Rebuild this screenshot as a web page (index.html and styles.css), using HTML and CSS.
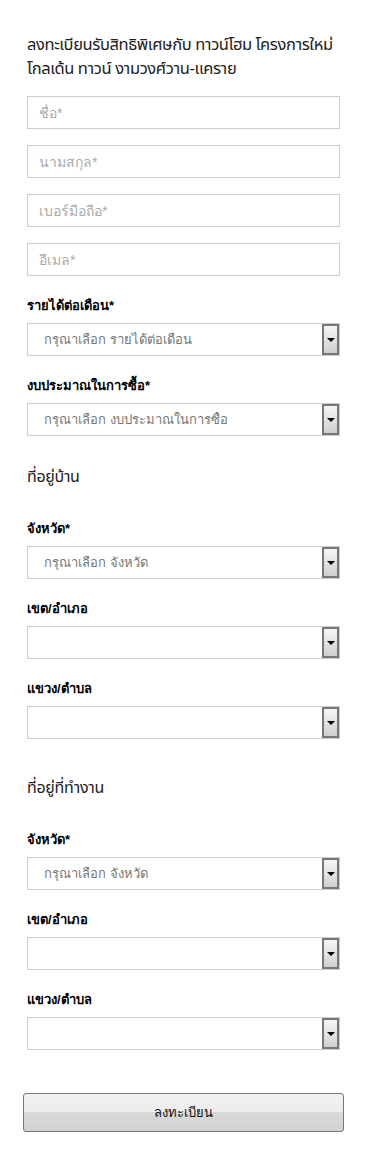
FILE: index.html
```html
<!DOCTYPE html>
<html lang="th">
<head>
    <meta charset="UTF-8">
    <meta name="viewport" content="width=device-width, initial-scale=1.0">
    <title>ลงทะเบียน</title>
    <link rel="stylesheet" href="styles.css">
</head>
<body>
    <div class="register">
        <h2 class="register-title">ลงทะเบียนรับสิทธิพิเศษกับ ทาวน์โฮม โครงการใหม่<br>โกลเด้น ทาวน์ งามวงศ์วาน-แคราย</h2>

        <div class="inputs">
            <input type="text" class="text-input" placeholder="ชื่อ*">
            <input type="text" class="text-input" placeholder="นามสกุล*">
            <input type="text" class="text-input" placeholder="เบอร์มือถือ*">
            <input type="text" class="text-input" placeholder="อีเมล*">
        </div>

        <div class="fields">
            <div class="field">
                <label class="field-label">รายได้ต่อเดือน*</label>
                <div class="select-wrap">
                    <select class="select"><option>กรุณาเลือก รายได้ต่อเดือน</option></select>
                    <span class="select-arrow"></span>
                </div>
            </div>
            <div class="field">
                <label class="field-label">งบประมาณในการซื้อ*</label>
                <div class="select-wrap">
                    <select class="select"><option>กรุณาเลือก งบประมาณในการซื้อ</option></select>
                    <span class="select-arrow"></span>
                </div>
            </div>
        </div>

        <h3 class="section-title home">ที่อยู่บ้าน</h3>
        <div class="fields">
            <div class="field">
                <label class="field-label">จังหวัด*</label>
                <div class="select-wrap">
                    <select class="select"><option>กรุณาเลือก จังหวัด</option></select>
                    <span class="select-arrow"></span>
                </div>
            </div>
            <div class="field">
                <label class="field-label">เขต/อำเภอ</label>
                <div class="select-wrap">
                    <select class="select"><option></option></select>
                    <span class="select-arrow"></span>
                </div>
            </div>
            <div class="field">
                <label class="field-label">แขวง/ตำบล</label>
                <div class="select-wrap">
                    <select class="select"><option></option></select>
                    <span class="select-arrow"></span>
                </div>
            </div>
        </div>

        <h3 class="section-title work">ที่อยู่ที่ทำงาน</h3>
        <div class="fields">
            <div class="field">
                <label class="field-label">จังหวัด*</label>
                <div class="select-wrap">
                    <select class="select"><option>กรุณาเลือก จังหวัด</option></select>
                    <span class="select-arrow"></span>
                </div>
            </div>
            <div class="field">
                <label class="field-label">เขต/อำเภอ</label>
                <div class="select-wrap">
                    <select class="select"><option></option></select>
                    <span class="select-arrow"></span>
                </div>
            </div>
            <div class="field">
                <label class="field-label">แขวง/ตำบล</label>
                <div class="select-wrap">
                    <select class="select"><option></option></select>
                    <span class="select-arrow"></span>
                </div>
            </div>
        </div>

        <button class="submit-btn" type="button">ลงทะเบียน</button>
    </div>
</body>
</html>
```

FILE: styles.css
```css
* {
    margin: 0;
    padding: 0;
    box-sizing: border-box;
}

body {
    font-family: "Liberation Sans", "Noto Sans", sans-serif;
    background: #fff;
    color: #111;
}

.register {
    padding: 33px 30px 18px 27px;
}

.register-title,
.section-title {
    font-family: "Noto Sans Thai", "Liberation Sans", "Noto Sans", sans-serif;
}

.register-title {
    font-size: 16.5px;
    font-weight: normal;
    line-height: 24px;
    letter-spacing: -0.4px;
    white-space: nowrap;
    color: #222;
    margin-bottom: 15px;
}

.inputs {
    display: flex;
    flex-direction: column;
    gap: 16px;
}

.text-input {
    display: block;
    width: 100%;
    height: 33px;
    border: 1px solid #ccc;
    padding: 0 11px;
    font-family: inherit;
    font-size: 14px;
    color: #333;
    outline: none;
}

.text-input::placeholder {
    color: #aaa;
}

/* sibling margins collapse with the headings above */
.fields {
    display: flex;
    flex-direction: column;
    gap: 21px;
    margin-top: 21px;
}

.field-label {
    display: block;
    font-size: 13px;
    font-weight: bold;
    line-height: 18px;
    margin-bottom: 8px;
    color: #000;
}

.select-wrap {
    position: relative;
    height: 33px;
}

.select {
    display: block;
    width: 100%;
    height: 33px;
    border: 1px solid #ccc;
    background: #fff;
    padding: 0 30px 0 16px;
    font-family: inherit;
    font-size: 13px;
    color: #777;
    appearance: none;
    -webkit-appearance: none;
    border-radius: 0;
    outline: none;
}

.select-arrow {
    position: absolute;
    top: 1px;
    right: 1px;
    width: 17px;
    height: 31px;
    border: 2px solid #777;
    background: linear-gradient(#f6f6f6, #cfcfcf);
    pointer-events: none;
}

.select-arrow::after {
    content: '';
    position: absolute;
    left: 3px;
    top: 12px;
    border-left: 4px solid transparent;
    border-right: 4px solid transparent;
    border-top: 4px solid #000;
}

.section-title {
    font-size: 16px;
    font-weight: normal;
    line-height: 24px;
    letter-spacing: -0.3px;
    color: #222;
}

.section-title.home {
    margin-top: 29px;
    margin-bottom: 31px;
}

.section-title.work {
    margin-top: 37px;
    margin-bottom: 31px;
}

.submit-btn {
    display: block;
    width: 321px;
    height: 39px;
    margin: 43px 0 0 -4px;
    border: 1px solid #777;
    border-radius: 3px;
    background: linear-gradient(#f2f2f2 0%, #ececec 50%, #d9d9d9 50%, #d2d2d2 100%);
    font-family: inherit;
    font-size: 13px;
    color: #111;
    cursor: pointer;
}
```
